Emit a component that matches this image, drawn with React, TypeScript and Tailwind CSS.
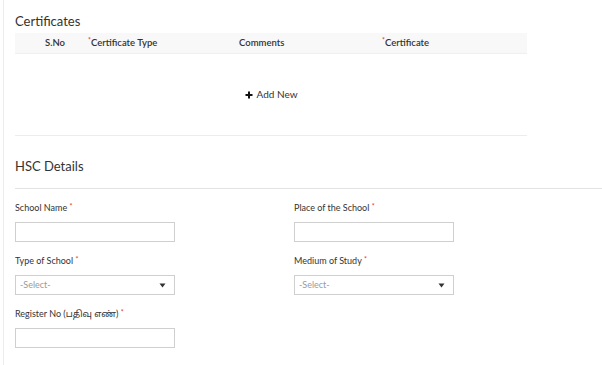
import React from "react";

const Star = () => <span className="text-[#e53935] text-[7px] align-top relative top-[-1px]">*</span>;

function Field({ label, select }: { label: React.ReactNode; select?: boolean }) {
  return (
    <div className="w-[160px]">
      <div className="h-[15px] text-[9px] leading-[15px] text-[#333]">{label}</div>
      <div className="mt-[7px] h-[20px] w-[160px] border border-[#cfcfcf] bg-white flex items-center justify-between px-[4px]">
        {select ? (
          <>
            <span className="text-[9px] text-[#9a9a9a]">-Select-</span>
            <svg width="7" height="5" viewBox="0 0 7 5" className="mr-[4px]">
              <path d="M0.5 0.5 L6.5 0.5 L3.5 4.5 Z" fill="#333" />
            </svg>
          </>
        ) : null}
      </div>
    </div>
  );
}

export default function App() {
  return (
    <div className="w-[602px] h-[365px] bg-white overflow-hidden" style={{ fontFamily: "Lato, 'Noto Sans', 'Noto Sans Tamil', sans-serif" }}>
      <div className="ml-[3px] h-full border-l border-[#ececec] pl-[11px]">
        <div className="pt-[13px] h-[33px] text-[13px] leading-[16px] text-[#333]">Certificates</div>
        <div className="w-[512px]">
          <div className="h-[21px] bg-[#f8f8f8] flex items-center text-[9.5px] font-semibold text-[#333] border-b border-[#f0f0f0]">
            <div className="w-[73px] pl-[30px]">S.No</div>
            <div className="w-[151px]"><Star />Certificate Type</div>
            <div className="w-[143px]">Comments</div>
            <div><Star />Certificate</div>
          </div>
          <div className="h-[81px] flex items-center justify-center">
            <div className="flex items-center gap-[4px] text-[10px] text-[#333]">
              <svg width="8" height="8" viewBox="0 0 8 8">
                <path d="M4 0.5 V7.5 M0.5 4 H7.5" stroke="#111" strokeWidth="2" />
              </svg>
              <span>Add New</span>
            </div>
          </div>
          <div className="border-t border-[#ececec]" />
        </div>
        <div className="h-[52px] pt-[22px] text-[13px] leading-[16px] text-[#333]">HSC Details</div>
        <div className="border-t border-[#e2e2e2]" />
        <div className="pt-[11px] flex flex-col gap-[11px]">
          <div className="flex gap-[119px]">
            <Field label={<>School Name <Star /></>} />
            <Field label={<>Place of the School <Star /></>} />
          </div>
          <div className="flex gap-[119px]">
            <Field label={<>Type of School <Star /></>} select />
            <Field label={<>Medium of Study <Star /></>} select />
          </div>
          <div className="flex">
            <Field label={<>Register No (பதிவு எண்) <Star /></>} />
          </div>
        </div>
      </div>
    </div>
  );
}
